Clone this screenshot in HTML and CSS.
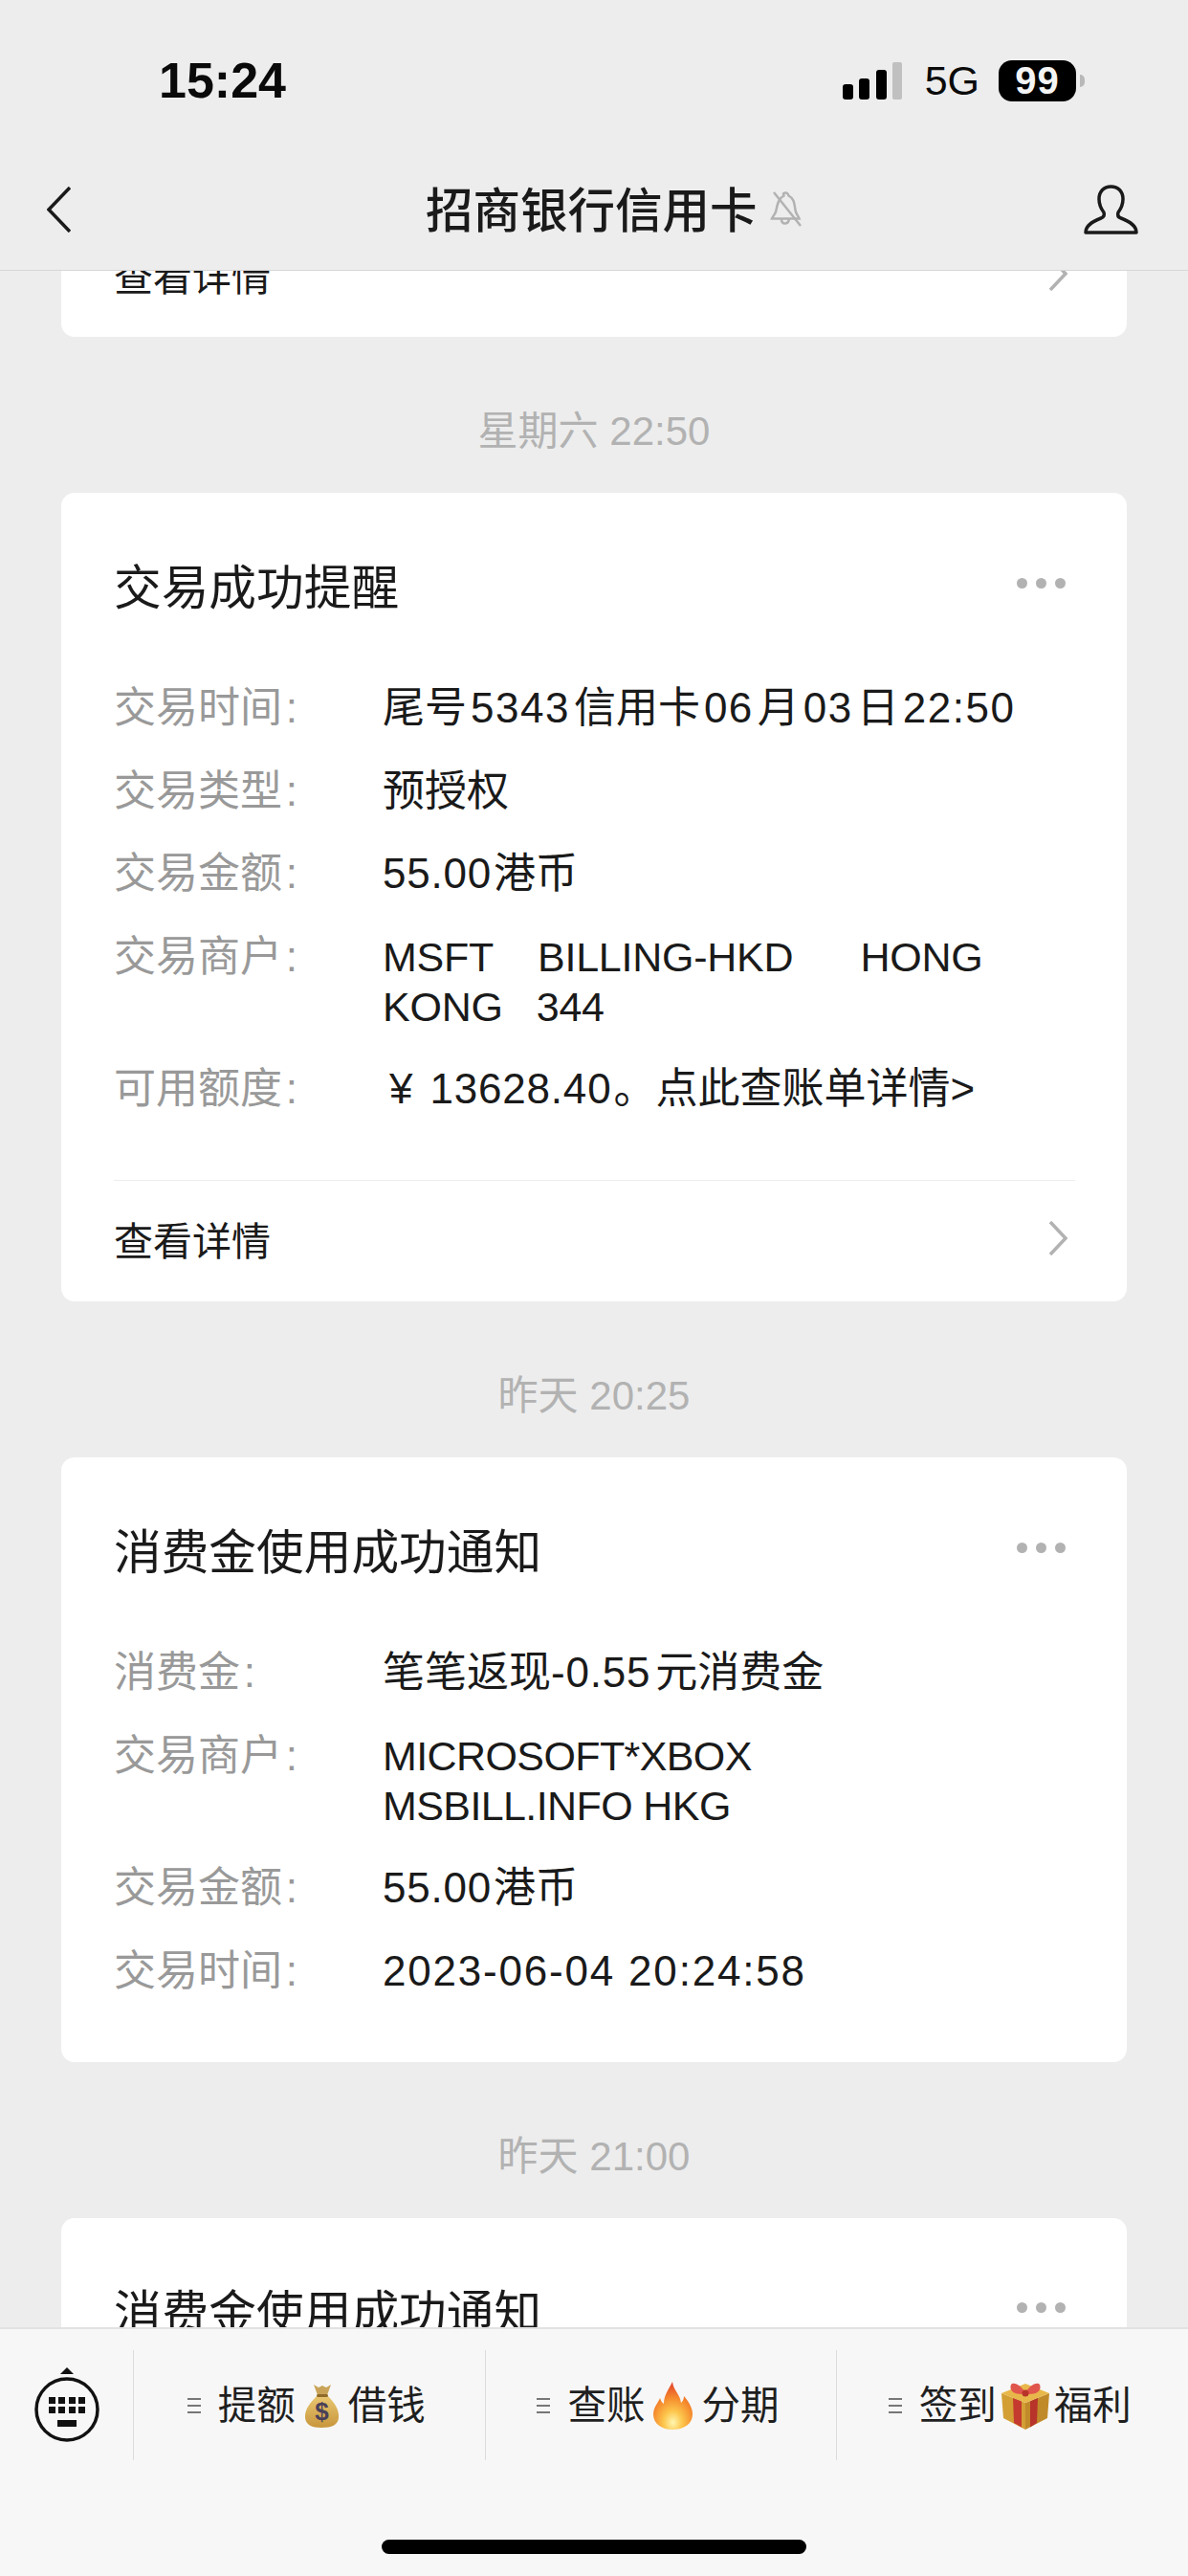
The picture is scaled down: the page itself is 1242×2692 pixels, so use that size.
FILE: index.html
```html
<!DOCTYPE html>
<html lang="zh-CN">

<head>
	<meta charset="UTF-8">
	<meta name="viewport" content="width=device-width, initial-scale=1.0">
	<title>招商银行信用卡</title>
	<link rel="stylesheet" href="styles.css">
</head>

<body>
	<div class="phone">
		<header class="top">
			<div class="status">
				<span class="clock">15:24</span>
				<svg class="signal" viewBox="0 0 62 39">
					<rect x="0" y="23" width="11" height="16" rx="3" fill="#000" />
					<rect x="17" y="17" width="11" height="22" rx="3" fill="#000" />
					<rect x="35" y="8" width="11" height="31" rx="3" fill="#000" />
					<rect x="52" y="0" width="10" height="39" rx="2" fill="#c0c0c0" />
				</svg>
				<span class="net">5G</span>
				<span class="battery">99</span>
				<span class="battery-cap"></span>
			</div>
			<div class="nav">
				<svg class="back" viewBox="0 0 25 48">
					<path d="M24 1 L2 24 L24 47" fill="none" stroke="#1a1a1a" stroke-width="3.5" />
				</svg>
				<span class="nav-title">招商银行信用卡</span>
				<svg class="bell" viewBox="0 0 36 37">
					<path d="M15 2.5 c2-2 5-1 5.5 2 c6 3 6 9 7 15 c.5 4 3 6 4 9 H3 c1-3 4-5 4.500-9 c1-5 2-12 8-15 Z M13 29 c0 6 7 6 8 0" fill="none" stroke="#b2b2b2" stroke-width="2.500" />
					<path d="M5 1 L33 36" stroke="#b2b2b2" stroke-width="2.500" />
				</svg>
				<svg class="person" viewBox="0 0 57 52">
					<path d="M2 50 c0-8 8-12 16-15 c3-1 4-3 3-6 c-3-4-5-9-5-14 C16 7 21 2 28.500 2 S41 7 41 15 c0 5-2 10-5 14 c-1 3 0 5 3 6 c8 3 16 7 16 15 Z" fill="none" stroke="#1a1a1a" stroke-width="3.500" stroke-linejoin="round" />
				</svg>
			</div>
		</header>

		<main class="feed">
			<section class="card card-cut">
				<div class="card-foot">
					<span>查看详情</span>
					<svg class="chevron" viewBox="0 0 20 36">
						<path d="M2 1 L18 18 L2 35" fill="none" stroke="#b2b2b2" stroke-width="3.500" />
					</svg>
				</div>
			</section>

			<div class="time">星期六 22:50</div>
			<section class="card">
				<div class="card-head">
					<h3>交易成功提醒</h3>
					<div class="dots"><i></i><i></i><i></i></div>
				</div>
				<div class="rows">
					<div class="row"><label>交易时间&#8202;:</label><div class="val">尾号<span class="num">5343</span>信用卡<span class="num">06</span>月<span class="num">03</span>日<span class="num">22:50</span></div></div>
					<div class="row"><label>交易类型&#8202;:</label><div class="val">预授权</div></div>
					<div class="row"><label>交易金额&#8202;:</label><div class="val"><span class="amt">55.00</span>港币</div></div>
					<div class="row"><label>交易商户&#8202;:</label><div class="val en en-loose">MSFT    BILLING-HKD      HONG KONG   344</div></div>
					<div class="row"><label>可用额度&#8202;:</label><div class="val"><span class="yen">¥</span><span class="amt">13628.40</span>。点此查账单详情&gt;</div></div>
				</div>
				<div class="card-foot">
					<span>查看详情</span>
					<svg class="chevron" viewBox="0 0 20 36">
						<path d="M2 1 L18 18 L2 35" fill="none" stroke="#b2b2b2" stroke-width="3.500" />
					</svg>
				</div>
			</section>

			<div class="time">昨天 20:25</div>
			<section class="card card-plain">
				<div class="card-head">
					<h3>消费金使用成功通知</h3>
					<div class="dots"><i></i><i></i><i></i></div>
				</div>
				<div class="rows">
					<div class="row"><label>消费金&#8202;:</label><div class="val">笔笔返现<span class="amt amt-gap">-0.55</span>元消费金</div></div>
					<div class="row"><label>交易商户&#8202;:</label><div class="val en">MICROSOFT*XBOX
MSBILL.INFO HKG</div></div>
					<div class="row"><label>交易金额&#8202;:</label><div class="val"><span class="amt">55.00</span>港币</div></div>
					<div class="row"><label>交易时间&#8202;:</label><div class="val date">2023-06-04 20:24:58</div></div>
				</div>
			</section>

			<div class="time">昨天 21:00</div>
			<section class="card card-plain">
				<div class="card-head">
					<h3>消费金使用成功通知</h3>
					<div class="dots"><i></i><i></i><i></i></div>
				</div>
			</section>
		</main>

		<footer class="bar">
			<div class="tabs">
				<div class="kbd">
					<svg viewBox="0 0 68 79" width="68" height="79">
						<path d="M34 0 L41 7 H27 Z" fill="#111" />
						<circle cx="34" cy="44" r="32" fill="none" stroke="#111" stroke-width="3.500" />
						<g fill="#111">
							<rect x="15" y="31" width="7" height="7" />
							<rect x="25" y="31" width="7" height="7" />
							<rect x="36" y="31" width="7" height="7" />
							<rect x="46" y="31" width="7" height="7" />
							<rect x="15" y="41" width="7" height="7" />
							<rect x="25" y="41" width="7" height="7" />
							<rect x="36" y="41" width="7" height="7" />
							<rect x="46" y="41" width="7" height="7" />
							<rect x="24" y="55" width="20" height="7" />
						</g>
					</svg>
				</div>

				<div class="tab">
					<span class="lines"><i></i><i></i><i></i></span>
					<span class="tab-text">提额</span>
					<svg class="emoji bag" viewBox="0 0 37 46">
						<defs>
							<linearGradient id="bagFill" x1="0" y1="0" x2="0" y2="1">
								<stop offset="0" stop-color="#e9c873" />
								<stop offset="1" stop-color="#c8963c" />
							</linearGradient>
						</defs>
						<path d="M10 1 L15 4 L19 2 L23 4 L28 1 L24 12 H14 Z" fill="#c9a458" />
						<path d="M14 12 H24 C31 19 37 27 36 36 C35 43 29 46 18 46 C8 46 2 43 1 36 C0 27 7 19 14 12 Z" fill="url(#bagFill)" />
						<rect x="13" y="11" width="12" height="3" rx="1.500" fill="#8f6a2a" />
						<text x="18.500" y="38" text-anchor="middle" class="dollar">$</text>
					</svg>
					<span class="tab-text">借钱</span>
				</div>

				<div class="tab">
					<span class="lines"><i></i><i></i><i></i></span>
					<span class="tab-text">查账</span>
					<svg class="emoji fire" viewBox="0 0 41 50">
						<defs>
							<radialGradient id="fireFill" cx="0.5" cy="0.85" r="0.8">
								<stop offset="0" stop-color="#fff6b0" />
								<stop offset="0.3" stop-color="#fdc64c" />
								<stop offset="0.65" stop-color="#f58a2d" />
								<stop offset="1" stop-color="#e4482a" />
							</radialGradient>
						</defs>
						<path d="M20 0 C21 9 28 13 29 22 C31 20 32 18 32 15 C38 22 41 28 41 34 C41 44 32 50 20 50 C9 50 0 44 0 34 C0 27 5 22 7 17 C8 20 9 22 11 23 C11 14 16 8 20 0 Z" fill="url(#fireFill)" />
					</svg>
					<span class="tab-text">分期</span>
				</div>

				<div class="tab">
					<span class="lines"><i></i><i></i><i></i></span>
					<span class="tab-text">签到</span>
					<svg class="emoji gift" viewBox="0 0 50 50">
						<path d="M0 12 L25 22 V50 L2 38 Z" fill="#d39f35" />
						<path d="M50 12 L25 22 V50 L48 38 Z" fill="#c08a2a" />
						<path d="M0 12 L25 2 L50 12 L25 22 Z" fill="#e8b74a" />
						<path d="M12 17 L21 20.500 V47.500 L13 43 Z" fill="#c53a2f" />
						<path d="M38 17 L30 20.500 V47.500 L37 43 Z" fill="#b8332a" />
						<path d="M25 11 C19 2 12 0 10 3 C8 8 11 14 25 13 C39 14 42 8 40 3 C38 0 31 2 25 11 Z" fill="#e0564d" />
						<circle cx="25" cy="12" r="3.500" fill="#b8332a" />
					</svg>
					<span class="tab-text">福利</span>
				</div>
			</div>
			<div class="home"></div>
		</footer>
	</div>
</body>

</html>
```

FILE: styles.css
```css
* {
	box-sizing: border-box;
}

body {
	margin: 0;
	font-family: 'Liberation Sans', 'Noto Sans CJK SC', sans-serif;
	color: #1a1a1a;
	background-color: #ededed;
}

.phone {
	display: flex;
	flex-direction: column;
	width: 1242px;
	height: 2692px;
	overflow: hidden;
}

/* top area */
.top {
	flex: none;
	height: 283px;
	background-color: #ededed;
	border-bottom: 1px solid #d6d6d6;
}

.status {
	display: flex;
	align-items: center;
	height: 155px;
	padding: 13px 108px 0 166px;
}

.clock {
	font-size: 52px;
	font-weight: 700;
	color: #0a0a0a;
}

.signal {
	width: 62px;
	height: 39px;
	margin-left: auto;
	margin-bottom: -1px;
}

.net {
	margin-left: 24px;
	font-size: 43px;
	color: #0a0a0a;
}

.battery {
	display: flex;
	justify-content: center;
	align-items: center;
	width: 81px;
	height: 43px;
	margin-left: 20px;
	border-radius: 14px;
	font-size: 40px;
	font-weight: 700;
	letter-spacing: 1px;
	color: #f4f4f4;
	background-color: #000;
}

.battery-cap {
	width: 5px;
	height: 13px;
	margin-left: 4px;
	border-radius: 0 6px 6px 0;
	background-color: #b8b8b8;
}

.nav {
	display: flex;
	align-items: center;
	height: 127px;
	padding: 0 52px 0 49px;
}

.back {
	width: 25px;
	height: 48px;
}

.nav-title {
	margin-left: 371px;
	padding-bottom: 5px;
	font-size: 49.5px;
	font-weight: 500;
}

.bell {
	width: 36px;
	height: 37px;
	margin-left: 12px;
}

.person {
	width: 57px;
	height: 52px;
	margin-left: auto;
}

/* message list */
.feed {
	flex: 1;
	min-height: 0;
	padding: 0 64px;
	overflow: hidden;
}

.time {
	padding: 73px 0 38px;
	text-align: center;
	font-size: 42px;
	line-height: 52px;
	color: #b2b2b2;
}

.card {
	padding: 0 54px 0 55px;
	border-radius: 14px;
	background-color: #fff;
}

.card-cut {
	margin-top: -58px;
}

.card-plain {
	padding-bottom: 69px;
}

.card-head {
	display: flex;
	justify-content: space-between;
	align-items: center;
	padding-top: 71px;
}

.card-head h3 {
	margin: 0;
	font-size: 49.7px;
	font-weight: 400;
	line-height: 58px;
}

.dots {
	display: flex;
	gap: 9px;
	margin: 0 10px 12px 0;
}

.dots i {
	width: 11px;
	height: 11px;
	border-radius: 50%;
	background-color: #b2b2b2;
}

.rows {
	display: flex;
	flex-direction: column;
	gap: 34.5px;
	margin-top: 70px;
}

.row {
	display: flex;
	font-size: 44px;
	line-height: 52px;
}

.row label {
	flex: none;
	width: 281px;
	color: #999;
}

.val {
	flex: 1;
	white-space: pre-wrap;
}

/* digits sit wider than Liberation's, caps a bit narrower */
.num {
	margin: 0 4px;
	letter-spacing: 1.5px;
}

.amt {
	margin-right: 2px;
	letter-spacing: .8px;
}

.amt-gap {
	margin-right: 5px;
}

.date {
	letter-spacing: 1.8px;
}

.en {
	font-size: 43px;
	letter-spacing: -.6px;
}

.en-loose {
	letter-spacing: -.25px;
}

.yen {
	margin: 0 18px 0 7px;
}

.card-foot {
	display: flex;
	justify-content: space-between;
	align-items: center;
	height: 127px;
	padding: 0 8px 6px 0;
	font-size: 41px;
}

.rows + .card-foot {
	margin-top: 69px;
	border-top: 1px solid #ededed;
}

.chevron {
	width: 20px;
	height: 36px;
}

/* bottom menu */
.bar {
	position: relative;
	flex: none;
	height: 260px;
	padding-top: 22px;
	background-color: #f7f7f7;
	border-top: 2px solid #e2e2e2;
}

.tabs {
	display: grid;
	grid-template-columns: 139px repeat(3, 1fr);
	height: 115px;
}

.kbd {
	display: flex;
	justify-content: center;
	align-items: center;
}

.tab {
	display: flex;
	justify-content: center;
	align-items: center;
	padding-right: 6px;
	font-size: 40.5px;
	color: #1f1f1f;
	border-left: 1px solid #dcdcdc;
}

.tab-text {
	padding-bottom: 7px;
}

.lines {
	display: flex;
	flex-direction: column;
	gap: 5px;
	width: 14px;
	margin-right: 18px;
}

.lines i {
	height: 2px;
	background-color: #777;
}

.emoji {
	flex: none;
	margin: 0 9px;
}

.bag {
	width: 37px;
	height: 46px;
}

.fire {
	width: 41px;
	height: 50px;
}

.gift {
	width: 50px;
	height: 50px;
	margin: 0 5px;
}

.dollar {
	font-family: 'Liberation Sans', sans-serif;
	font-size: 26px;
	font-weight: 700;
	fill: #4a4058;
}

.home {
	position: absolute;
	left: 399px;
	bottom: 23px;
	width: 444px;
	height: 15px;
	border-radius: 8px;
	background-color: #000;
}
```
